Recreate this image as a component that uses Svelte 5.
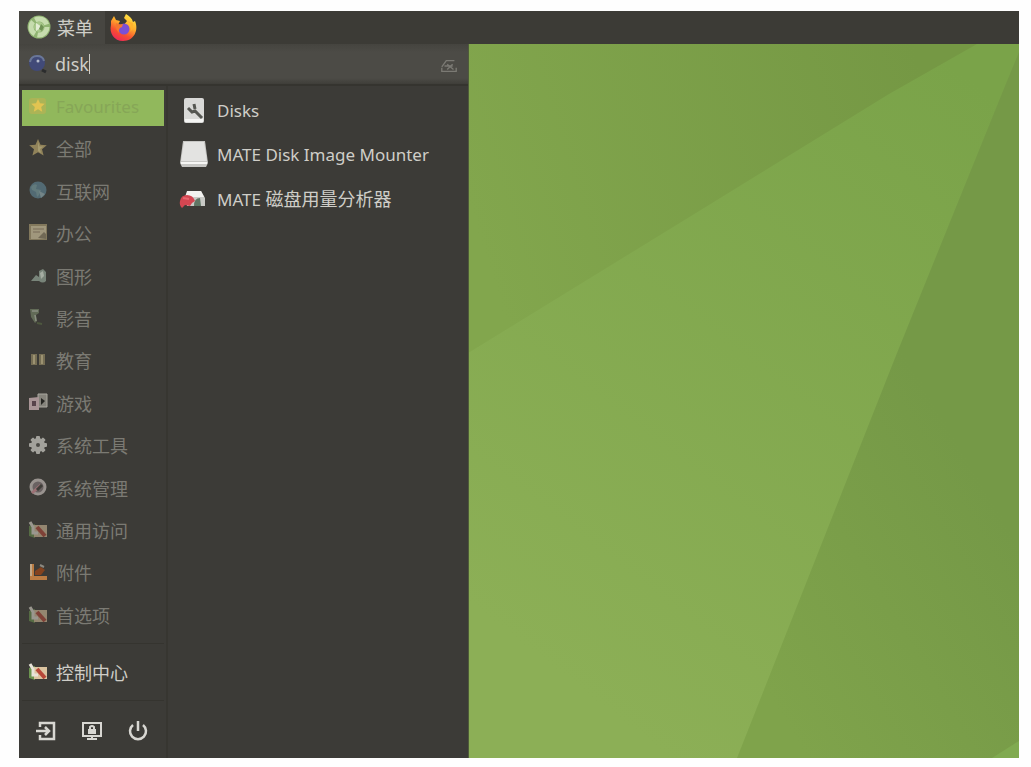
<script>
  const categories = [
    ['Favourites', 'fav'], ['全部', 'all'], ['互联网', 'web'], ['办公', 'office'],
    ['图形', 'graphics'], ['影音', 'media'], ['教育', 'education'], ['游戏', 'games'],
    ['系统工具', 'gear'], ['系统管理', 'admin'], ['通用访问', 'prefs'], ['附件', 'accessories'],
    ['首选项', 'prefs']
  ];
  const results = [
    { latin: 'Disks', cjk: '', icon: 'disks' },
    { latin: 'MATE Disk Image Mounter', cjk: '', icon: 'drive' },
    { latin: 'MATE', cjk: '磁盘用量分析器', icon: 'usage' }
  ];
  let query = $state('disk');
</script>

{#snippet icon(name)}
  <svg class="icon" viewBox="0 0 20 20" aria-hidden="true">
    {#if name === 'fav'}
      <rect x="1" y="2" width="17" height="16" rx="3" fill="#bdb052" opacity=".6" />
      <path d="M10 3l2 4.300 4.700.5-3.500 3.200 1 4.700-4.200-2.400-4.200 2.400 1-4.700-3.500-3.200 4.700-.5z" fill="#e2c451" />
    {:else if name === 'all'}
      <path d="M10 1l2.500 5.700 6.300.5-4.800 4 1.600 6.300L10 14.200 4.400 17.500 6 11.200l-4.800-4 6.300-.5z" fill="#91835a" />
      <path d="M10 4l1.500 4.500h4L12 11l1 4-3-2z" fill="#a69b70" />
    {:else if name === 'web'}
      <circle cx="10" cy="9" r="8.500" fill="#526a73" />
      <path d="M3 6q3-4 6-2l-1 4 5 1-2 5-2 2-1-5-4-2z" fill="#627a7c" />
      <path d="M11 10l6 3-4 4z" fill="#748587" />
    {:else if name === 'office'}
      <rect x="1" y="1" width="18" height="16" fill="#82785c" />
      <rect x="3" y="3" width="15" height="13" fill="#a0977c" />
      <path d="M5 6h11M5 9h7" stroke="#857b64" stroke-width="1.500" /><path d="M10 15l6-6 2 2v5z" fill="#716955" />
    {:else if name === 'graphics'}
      <path d="M3 15l5-6 3 2V5l4-2 3 3v9q-3 3-7 0z" fill="#788479" />
      <path d="M12 7l3-2 1 5-3 3z" fill="#a5ada2" />
    {:else if name === 'media'}
      <path d="M2 1h9v4l-3 2 1 6-2 2-4-6z" fill="#626b57" />
      <path d="M4 3h6M7 7l1 6" stroke="#8b9083" stroke-width="1.500" />
      <path d="M9 15l5 1" stroke="#4e583f" stroke-width="2" />
    {:else if name === 'education'}
      <path d="M3 4h6v11H3zM11 4h6v11h-6z" fill="#766e54" />
      <path d="M6 5v9M14 5v9" stroke="#9c9271" stroke-width="2" />
    {:else if name === 'games'}
      <path d="M10 1h9v13h-9z" fill="#85837b" stroke="#aaa8a0" />
      <path d="M1 5l10-1v13H1z" fill="#a99596" />
      <path d="M4 8h4v5H4z" fill="#58444b" /><path d="M13 5l4 3-4 4z" fill="#262622" />
    {:else if name === 'gear'}
      <g fill="#a3a29c">
        {#each [0, 45, 90, 135] as angle}<rect x="8" y="1" width="4" height="18" rx="1" transform="rotate({angle} 10 10)" />{/each}
        <circle cx="10" cy="10" r="7" />
      </g><circle cx="10" cy="10" r="2" fill="#4c4b46" />
    {:else if name === 'admin'}
      <circle cx="10" cy="9" r="7" fill="#6a6262" stroke="#99938f" stroke-width="3" />
      <path d="M4 15L13 7" stroke="#9c7074" stroke-width="3" /><path d="M9 12l5-5" stroke="#3f3e39" stroke-width="3" />
    {:else if name === 'prefs' || name === 'control'}
      <g opacity={name === 'control' ? 1 : 0.55}>
        <path d="M1 6l6-2v14l-6-2z" fill="#6c9550" />
        <path d="M6 5h13v12H6z" fill="#dcc4a0" />
        <path d="M2 2l3 5v6h5" stroke="#e8e3d8" stroke-width="3" fill="none" />
        <path d="M9 7l8 9" stroke="#b74738" stroke-width="4" fill="none" />
      </g>
    {:else if name === 'accessories'}
      <path d="M4 2v14h15" stroke="#bb7c43" stroke-width="4" fill="none" />
      <path d="M3 2v12" stroke="#c2a888" stroke-width="2" />
      <path d="M7 13V9l6-4 4 3-4 5z" fill="#84431f" /><path d="M12 3l4 2" stroke="#8c8980" stroke-width="2" />
    {/if}
  </svg>
{/snippet}

<main>
  <div class="desktop">
    <header>
      <button class="menu-button">
        <svg class="logo" viewBox="0 0 24 24" aria-hidden="true"><circle cx="12" cy="12" r="11.500" fill="#8fb371" /><circle cx="12" cy="12" r="8" fill="none" stroke="#c6dcae" stroke-width="5" stroke-dasharray="14 2.750" /><circle cx="12" cy="12" r="5" fill="#a9c98c" /><path d="M9 8l6 4-6 4z" fill="#e2ecd3" /><path d="M14 9l3 3-2 4-3-2z" fill="#6f9254" /></svg>
        <span>菜单</span>
      </button>
      <button class="firefox" aria-label="Firefox">
        <svg viewBox="0 0 30 30" aria-hidden="true">
          <defs><linearGradient id="flame" x1=".8" y1="0" x2=".3" y2="1"><stop stop-color="#ffed46" /><stop offset=".42" stop-color="#ffab2c" /><stop offset=".72" stop-color="#f75030" /><stop offset="1" stop-color="#ed2858" /></linearGradient></defs>
          <path d="M2 8l3-5 2 4 4 1-2 4 5 1 4-5-3-3 2-4c3 2 6 4 7 8l2-1c4 9-1 20-12 20C5 28 0 20 2 12z" fill="url(#flame)" />
          <circle cx="15" cy="16" r="5.500" fill="#7b50d6" />
          <path d="M7 10q3 2 7 1l-1 3q-4 1-3 6-4-4-3-10z" fill="#f4772f" />
          <path d="M18 8q7 5 3 11 4-3 3-9z" fill="#ffb32d" />
        </svg>
      </button>
    </header>
    <div class="workspace">
      <section class="menu">
        <div class="search">
          <svg class="search-icon" viewBox="0 0 20 20" aria-hidden="true"><circle cx="9" cy="9" r="8" fill="#414a78" /><path d="M2 8q1-6 7-6t7 5" fill="none" stroke="#6a7797" stroke-width="2" /><circle cx="10" cy="7" r="1.500" fill="#b4bbcc" /><path d="M14 16l4 2" stroke="#2b2c2d" stroke-width="3" /></svg>
          <div class="search-text"><input aria-label="搜索" bind:value={query} /><i class="caret"></i></div>
          <button class="clear" aria-label="清除"><svg viewBox="0 0 20 20" aria-hidden="true"><path d="M2 11l5-7h9M5 10h9M2 12v4h16v-4M8 8l7 6M14 8l-6 6" fill="none" stroke="#7b7a74" stroke-width="1.500" /></svg></button>
        </div>
        <div class="columns">
          <aside>
            <nav>
              {#each categories as [label, name], index}
                <button class:active={index === 0}>{@render icon(name)}<span>{label}</span></button>
              {/each}
            </nav>
            <button class="control">{@render icon('control')}<span>控制中心</span></button>
            <div class="session">
              <button aria-label="注销"><svg viewBox="0 0 20 20" aria-hidden="true"><path d="M4 6V2h14v16H4v-4M0 10h13M9 6l4 4-4 4" fill="none" stroke="#d8d7d2" stroke-width="2.500" /></svg></button>
              <button aria-label="锁屏"><svg viewBox="0 0 20 20" aria-hidden="true"><path d="M1 2h18v13H1zM5 18h10M10 15v3" fill="none" stroke="#d8d7d2" stroke-width="2" /><rect x="6" y="8" width="8" height="5" fill="#d8d7d2" /><path d="M8 9V6q2-2 4 0v3" fill="none" stroke="#d8d7d2" stroke-width="2" /></svg></button>
              <button aria-label="关机"><svg viewBox="0 0 20 20" aria-hidden="true"><path d="M5 4a8 8 0 1 0 10 0M10 0v10" fill="none" stroke="#d8d7d2" stroke-width="2.500" /></svg></button>
            </div>
          </aside>
          <div class="results">
            {#each results as result}
              <button>
                <svg class="app-icon" viewBox="0 0 30 30" aria-hidden="true">
                  {#if result.icon === 'disks'}
                    <rect x="5" y="3" width="20" height="25" rx="2" fill="#d9d9d7" /><path d="M6 24h18v3H6z" fill="#f4f4f2" /><path d="M9 13l4 4 3-1 7 7M15 9l1 5" fill="none" stroke="#555651" stroke-width="3" />
                  {:else if result.icon === 'drive'}
                    <path d="M4 2h22l3 22-2 4H3l-2-4z" fill="#c7c7c4" /><path d="M5 3h20l3 19H2z" fill="#e3e3e1" /><path d="M2 24h26" stroke="#f6f6f4" stroke-width="2" />
                  {:else}
                    <path d="M8 8h14l4 7v8H8z" fill="#c8c9c5" /><path d="M8 8h14l3 6H6z" fill="#f2f2ef" /><path d="M15 23q0-8 6-8l1 8z" fill="#5f7564" /><path d="M1 18q1-6 7-6 6 0 8 6l-3 2-2 3-5-1-3 3q-3-3-2-7z" fill="#d34651" /><path d="M4 15l6 1" stroke="#e9666f" stroke-width="2" />
                  {/if}
                </svg>
                <span>{result.latin}{#if result.cjk}{' '}<b>{result.cjk}</b>{/if}</span>
              </button>
            {/each}
          </div>
        </div>
      </section>
      <div class="wallpaper">
        <svg viewBox="0 0 550 713" preserveAspectRatio="none" aria-hidden="true">
          <defs>
            <linearGradient id="base" gradientUnits="userSpaceOnUse" x1="80" y1="620" x2="520" y2="50"><stop stop-color="#8caf56" /><stop offset="1" stop-color="#7aa349" /></linearGradient>
            <linearGradient id="upper" gradientUnits="userSpaceOnUse" x1="0" y1="160" x2="450" y2="20"><stop stop-color="#82a64d" /><stop offset="1" stop-color="#759844" /></linearGradient>
            <linearGradient id="side" gradientUnits="userSpaceOnUse" x1="300" y1="650" x2="550" y2="500"><stop stop-color="#7fa34b" /><stop offset="1" stop-color="#759947" /></linearGradient>
          </defs>
          <path d="M0 0h550v713H0z" fill="url(#base)" />
          <path d="M0 0h508L420 50 220 173 0 308z" fill="url(#upper)" />
          <path d="M550 8L536 42 427 311 268 713h282z" fill="url(#side)" />
          <path d="M550 696v17h-27z" fill="#80aa50" />
        </svg>
      </div>
    </div>
  </div>
</main>

<style>
  :global(body) { margin: 0; background: #fefefe; }
  :global(*) { box-sizing: border-box; }
  main { height: 100vh; min-height: 640px; padding: 11px 12px 9px 19px; display: flex; font: 17px "Noto Sans", "Noto Sans CJK SC", sans-serif; color: #cfcec8; }
  .desktop { flex: 1; min-width: 0; display: flex; flex-direction: column; background: #3c3b37; }
  button { display: flex; align-items: center; padding: 0; border: 0; background: none; color: inherit; font: inherit; text-align: left; }
  svg { display: block; flex: none; }
  header { height: 33px; display: flex; background: #3c3b36; }
  .menu-button { width: 86px; gap: 6px; padding: 0 0 2px 8px; background: #474641; font-size: 18px; }
  .logo { width: 24px; height: 24px; }
  .firefox { padding-left: 4px; }
  .firefox svg { width: 30px; height: 30px; }
  .workspace { flex: 1; min-height: 0; display: flex; }
  .menu { flex: 0 0 450px; display: flex; flex-direction: column; background: #3c3b37; border-right: 1px solid #4f5b3a; }
  .search { height: 40px; display: flex; align-items: center; padding: 0 10px 0 9px; background: linear-gradient(#45443f, #4c4b46 20%, #4c4b46 85%, #3f3e39); }
  .search-icon { width: 20px; height: 20px; }
  .search-text { flex: 1; display: flex; align-items: center; padding-left: 7px; }
  input { field-sizing: content; padding: 0; border: 0; outline: 0; background: none; color: inherit; font: inherit; font-size: 18px; }
  .caret { width: 1px; height: 20px; background: #cfcec8; }
  .clear { padding-top: 4px; }
  .clear svg { width: 18px; height: 18px; }
  .columns { flex: 1; min-height: 0; display: flex; border-top: 2px solid #35342f; }
  aside { width: 149px; display: flex; flex-direction: column; padding: 4px 2px 0 3px; border-right: 2px solid #373631; font-size: 18px; }
  nav { flex: 1; display: flex; flex-direction: column; justify-content: space-between; color: #7b7a73; padding-bottom: 8px; }
  nav button { height: 36px; gap: 8px; padding: 0 0 4px 6px; }
  nav .active { background: #91b85c; color: #86a657; font-size: 17px; }
  .icon { width: 20px; height: 20px; }
  .control { height: 58px; gap: 8px; padding-left: 6px; border-top: 1px solid #35342f; border-bottom: 1px solid #35342f; }
  .session { height: 57px; display: flex; align-items: center; gap: 26px; padding: 2px 0 0 14px; }
  .session svg { width: 20px; height: 20px; }
  .results { flex: 1; padding: 2px 0 0 11px; display: flex; flex-direction: column; }
  .results button { height: 44px; gap: 8px; white-space: nowrap; }
  .app-icon { width: 30px; height: 30px; }
  b { font-size: 18px; font-weight: 400; }
  .wallpaper { flex: 1; min-width: 0; display: flex; }
  .wallpaper svg { width: 100%; height: 100%; }
</style>
